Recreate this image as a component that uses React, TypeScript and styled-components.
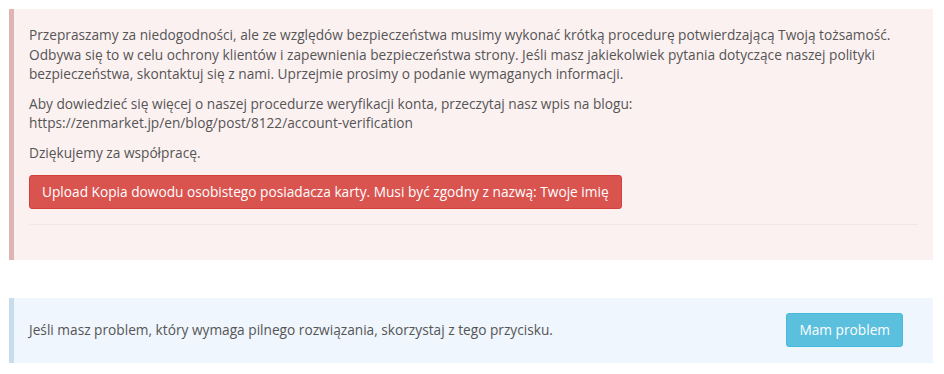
import React from 'react'
import styled, { createGlobalStyle } from 'styled-components'

const GlobalStyle = createGlobalStyle`
  body {
    margin: 0;
    background: #fff;
    font-family: "Open Sans", "Liberation Sans", sans-serif;
    font-size: 13.7px;
    line-height: 1.428571;
    color: #555;
  }
`

const Page = styled.div`
  padding: 9px 11px 0 9px;
  display: flex;
  flex-direction: column;
  gap: 38px;
`

const Callout = styled.div<{ tone: 'danger' | 'info' }>`
  background: ${p => (p.tone === 'danger' ? '#fcf1f1' : '#eff6fd')};
  border-left: 5px solid ${p => (p.tone === 'danger' ? '#dfb5b4' : '#c8dcec')};
  padding: ${p => (p.tone === 'danger' ? '16px 15px 15px' : '15px 15px 16px')};
`

const Text = styled.p`
  margin: 0 0 10px;
`

const Button = styled.button<{ tone: 'danger' | 'info' }>`
  display: inline-block;
  font-family: inherit;
  font-size: 13.7px;
  line-height: 1.428571;
  color: #fff;
  background: ${p => (p.tone === 'danger' ? '#d9534f' : '#5bc0de')};
  border: 1px solid ${p => (p.tone === 'danger' ? '#d43f3a' : '#46b8da')};
  border-radius: 3px;
  padding: 6px 12px;
  margin-top: ${p => (p.tone === 'danger' ? '3px' : '0')};
  cursor: pointer;
`

const Divider = styled.hr`
  border: 0;
  border-top: 1px solid #f3e6e6;
  margin: 15px 0 20px;
`

const ProblemRow = styled.div`
  display: flex;
  align-items: center;
  justify-content: space-between;
  padding-right: 15px;
`

export default function App() {
  return (
    <Page>
      <GlobalStyle />
      <Callout tone="danger">
        <Text>
          Przepraszamy za niedogodności, ale ze względów bezpieczeństwa musimy wykonać krótką procedurę potwierdzającą Twoją tożsamość.
          Odbywa się to w celu ochrony klientów i zapewnienia bezpieczeństwa strony. Jeśli masz jakiekolwiek pytania dotyczące naszej polityki
          bezpieczeństwa, skontaktuj się z nami. Uprzejmie prosimy o podanie wymaganych informacji.
        </Text>
        <Text>
          Aby dowiedzieć się więcej o naszej procedurze weryfikacji konta, przeczytaj nasz wpis na blogu:
          <br />
          https://zenmarket.jp/en/blog/post/8122/account-verification
        </Text>
        <Text>Dziękujemy za współpracę.</Text>
        <Button tone="danger">Upload Kopia dowodu osobistego posiadacza karty. Musi być zgodny z nazwą: Twoje imię</Button>
        <Divider />
      </Callout>
      <Callout tone="info">
        <ProblemRow>
          <span>Jeśli masz problem, który wymaga pilnego rozwiązania, skorzystaj z tego przycisku.</span>
          <Button tone="info">Mam problem</Button>
        </ProblemRow>
      </Callout>
    </Page>
  )
}
